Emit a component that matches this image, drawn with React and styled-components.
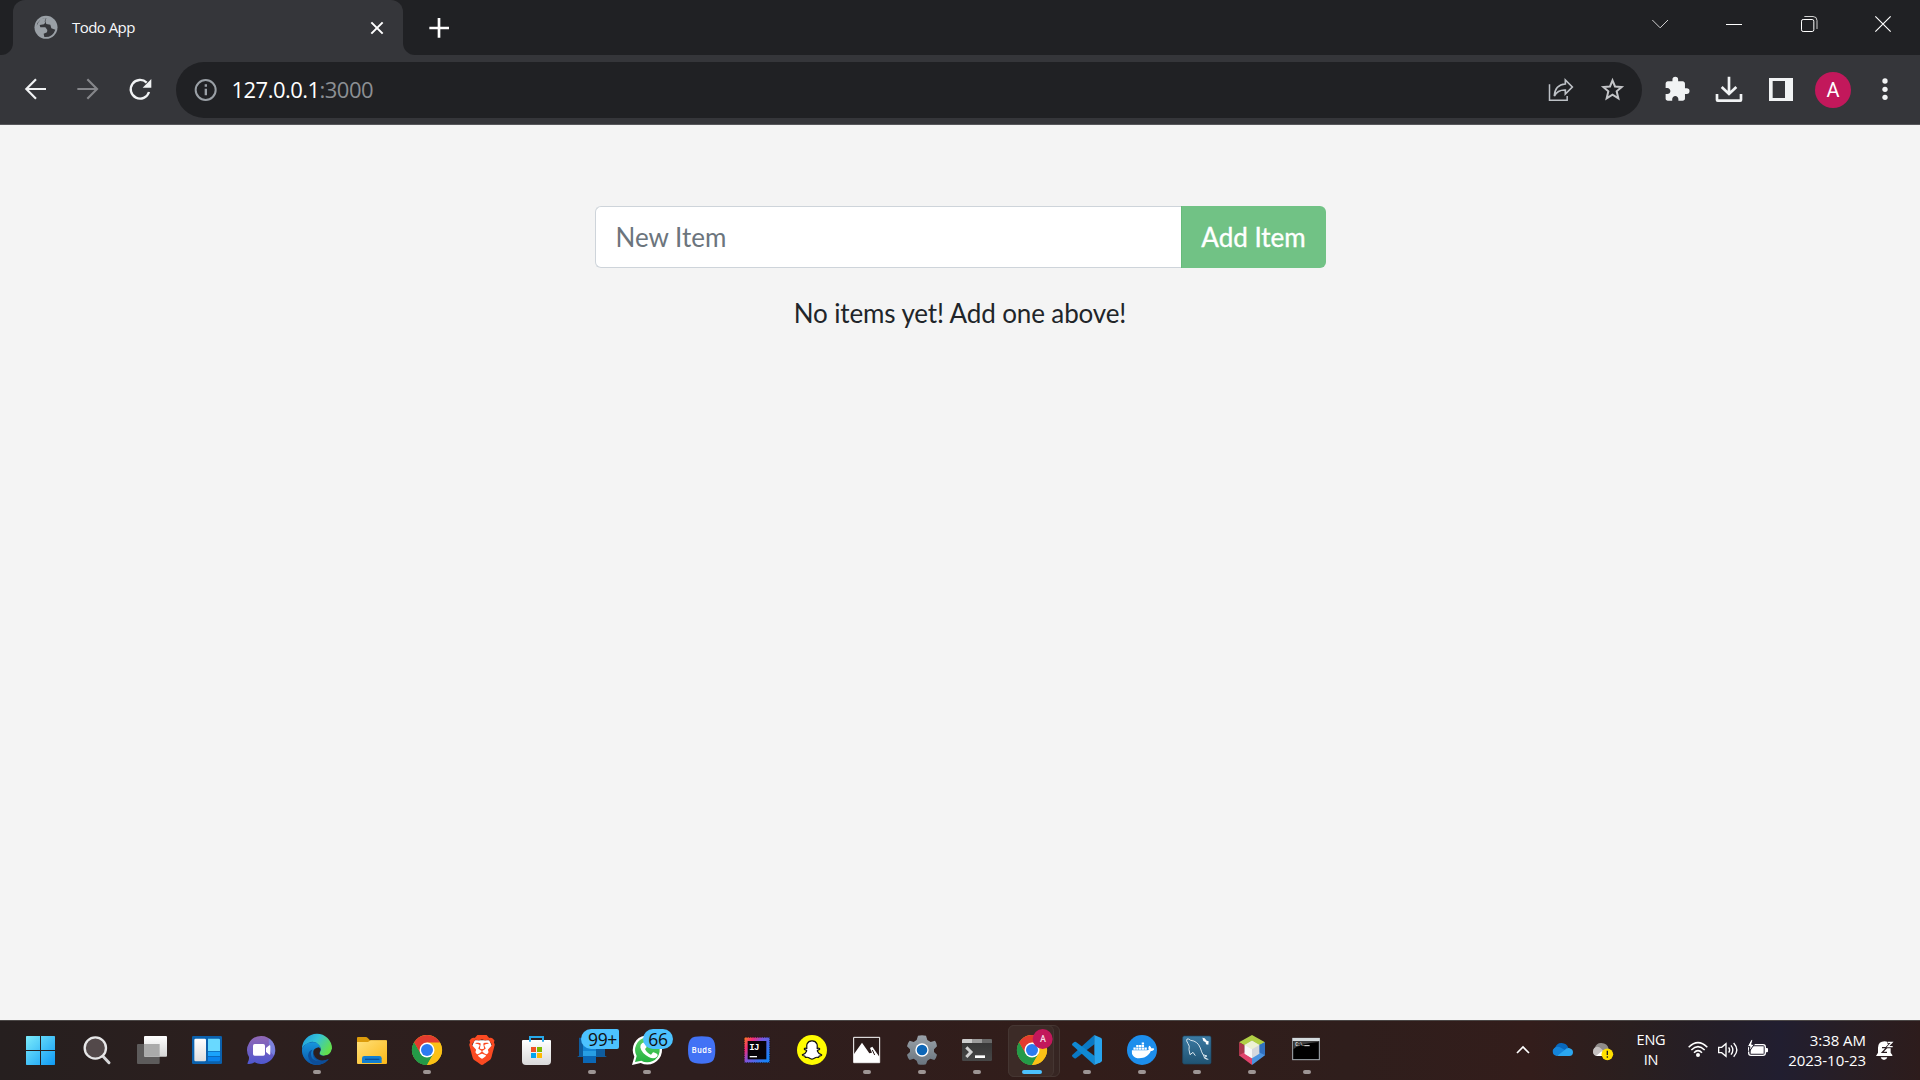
import React from "react";
import styled, { createGlobalStyle, css } from "styled-components";
import { FaDocker, FaSnapchatGhost } from "react-icons/fa";
import { SiBrave } from "react-icons/si";
import { MdExtension } from "react-icons/md";

const ui = `"Open Sans", "Noto Sans", sans-serif`;

const GlobalStyle = createGlobalStyle`
  * { box-sizing: border-box; }
  body { margin: 0; overflow: hidden; background: #f4f4f4; font-family: ${ui}; }
`;

const Screen = styled.div`
  display: flex;
  flex-direction: column;
  width: 1920px;
  height: 1080px;
`;

/* ---------- browser chrome ---------- */

const TabStrip = styled.header`
  display: flex;
  height: 55px;
  background: #35363a;
`;

const StripEdge = styled.div`
  width: 13px;
  background: #202124;
  border-bottom-right-radius: 12px;
`;

const TabSlot = styled.div`
  width: 390px;
  background: #202124;
`;

const Tab = styled.div`
  display: flex;
  align-items: center;
  height: 55px;
  padding: 0 17px 0 21px;
  border-radius: 12px 12px 0 0;
  background: #35363a;
`;

const TabTitle = styled.span`
  flex: 1;
  margin: 0 0 2px 14px;
  color: #f8f9fa;
  font-size: 15px;
  line-height: 20px;
  letter-spacing: -0.55px;
`;

const StripRest = styled.div`
  flex: 1;
  display: flex;
  justify-content: space-between;
  padding: 0 0 0 24px;
  background: #202124;
  border-bottom-left-radius: 12px;
`;

const NewTab = styled.div`
  display: flex;
  align-items: center;
  height: 55px;
`;

const WindowControls = styled.div`
  display: flex;
  height: 48px;
`;

const Control = styled.div`
  display: flex;
  align-items: center;
  justify-content: center;
  width: 74.33px;
`;

const Toolbar = styled.nav`
  display: flex;
  align-items: center;
  height: 70px;
  padding: 0 9px 1px 10px;
  background: #35363a;
  border-bottom: 1px solid #57575b;
`;

const ToolSlot = styled.div`
  display: flex;
  align-items: center;
  justify-content: center;
  width: 52px;
  height: 52px;
`;

const AddressBar = styled.div`
  flex: 1;
  display: flex;
  align-items: center;
  height: 56px;
  margin: 2px 9px 0 10px;
  padding: 0 3px 0 14px;
  border-radius: 28px;
  background: #202124;
`;

const Url = styled.span`
  flex: 1;
  margin: 0 0 2px 9.5px;
  color: #ffffff;
  font-size: 22px;
  line-height: 30px;
  letter-spacing: -0.53px;
`;

const Port = styled.span`
  color: #8c8f93;
`;

const Avatar = styled.div`
  display: flex;
  align-items: center;
  justify-content: center;
  width: 36px;
  height: 36px;
  margin-top: 1px;
  border-radius: 50%;
  background: #c2185b;
  color: #fff;
  font: 20px Roboto, sans-serif;
`;

/* ---------- page ---------- */

const Page = styled.main`
  flex: 1;
  display: flex;
  flex-direction: column;
  align-items: center;
  padding-top: 81px;
  background: #f4f4f4;
  color: #212529;
  font-family: Lato, sans-serif;
`;

const InputGroup = styled.form`
  display: flex;
  width: 731px;
  height: 62px;
`;

const ItemInput = styled.input`
  flex: 1;
  min-width: 0;
  padding: 0 20px;
  border: 1px solid #ced4da;
  border-right: 0;
  border-radius: 6px 0 0 6px;
  background: #fff;
  font: 26px Lato, sans-serif;
  &::placeholder { color: #6c757d; opacity: 1; }
`;

const AddButton = styled.button`
  width: 145px;
  padding: 0;
  border: 0;
  border-left: 1px solid #66ba7a;
  border-radius: 0 6px 6px 0;
  background: #71c285;
  color: #fff;
  font: 26px Lato, sans-serif;
  -webkit-text-stroke: 0.35px #fff;
`;

const Empty = styled.p`
  margin: 25px 0 0;
  font-size: 26px;
  line-height: 40px;
  letter-spacing: -0.12px;
`;

/* ---------- taskbar ---------- */

const Taskbar = styled.footer`
  display: flex;
  justify-content: space-between;
  height: 60px;
  padding-left: 14.5px;
  border-top: 1px solid #4b4746;
  background: linear-gradient(90deg, #261f1f 0, #2c1f1e 240px, #2e1e1e 700px, #321d1a 1080px, #2f1e1c 1350px, #331d1b 1530px, #2a1f1f 1630px, #241e28 1720px, #211e30 1780px, #281e24 1850px, #2d1c1c 1920px);
`;

const Apps = styled.div`
  display: flex;
`;

const AppSlot = styled.div`
  display: flex;
  flex-direction: column;
  align-items: center;
  gap: 5px;
  width: 55px;
  padding-top: 14px;
  position: relative;
  isolation: isolate;
  ${(p) =>
    p.$active &&
    css`
      &::before,
      &::after {
        content: "";
        position: absolute;
        z-index: -1;
        top: 4px;
        left: 3px;
        width: 44px;
        height: 50px;
        border: 1px solid #453632;
        border-radius: 6px;
        background: #3c2b27;
      }
      &::before {
        width: 50px;
        background: #362522;
      }
    `}
`;

const Running = styled.i`
  width: ${(p) => (p.$active ? 20 : 8)}px;
  height: 4px;
  border-radius: 2px;
  background: ${(p) => (p.$active ? "#4cc2ff" : "#9d9594")};
`;

const Badge = styled.span`
  position: absolute;
  top: 8px;
  left: ${(p) => p.$left}px;
  width: ${(p) => p.$width}px;
  height: 20px;
  padding-left: ${(p) => (p.$clipped ? 5 : 0)}px;
  border-radius: ${(p) => (p.$clipped ? "10px 2px 2px 10px" : "10px")};
  background: #4cc2ff;
  color: #101010;
  font-size: 17.5px;
  line-height: 21px;
  letter-spacing: -0.3px;
  text-align: center;
`;

const Tray = styled.div`
  display: flex;
  align-items: center;
  height: 58px;
  padding-right: 18px;
`;

const TrayItem = styled.div`
  display: flex;
  justify-content: center;
  width: ${(p) => p.$width}px;
`;

const TrayText = styled.div`
  width: ${(p) => p.$width}px;
  color: #fff;
  font-size: ${(p) => p.$size}px;
  line-height: 20px;
  text-align: ${(p) => p.$align};
  letter-spacing: ${(p) => p.$spacing || 0}px;
`;

/* Artwork is drawn on a grid of three units per pixel. */
const Glyph = ({ box, children }) => {
  const [, , w, h] = box.split(" ").map(Number);
  return (
    <svg width={w / 3} height={h / 3} viewBox={box} fill="none" display="block" overflow="visible">
      {children}
    </svg>
  );
};

const Grad = ({ id, from, to, diagonal }) => (
  <linearGradient id={id} x1="0" y1="0" x2={diagonal ? 1 : 0} y2="1">
    <stop stopColor={from} />
    <stop offset="1" stopColor={to} />
  </linearGradient>
);

const ChromeLogo = () => (
  <>
    <circle cx="45" cy="45" r="45" fill="#fbc116" />
    <path d="M6 22.5A45 45 0 0 0 45 90L64.5 56.2L45 45H19Z" fill="#249a48" />
    <path d="M84 22.5A45 45 0 0 1 45 90L64.5 56.2L45 22.5Z" fill="#fbc116" />
    <path d="M6 22.5A45 45 0 0 1 84 22.5H45L40 34L25.5 56Z" fill="#e33b2e" />
    <path d="M6 22.5L25.5 56L40 60V80L45 90A45 45 0 0 1 6 22.5Z" fill="#249a48" />
    <circle cx="45" cy="45" r="22.5" fill="#fff" />
    <circle cx="45" cy="45" r="18" fill="#2b7bf0" />
  </>
);

const apps = [
  {
    box: "81 60 90 90",
    art: (
      <>
        <Grad id="win" from="#7cecfb" to="#0f9af5" diagonal />
        <path d="M78 65q0-2 2-2h40v42H78zM123 63h40q2 0 2 2v40h-42zM78 108h42v42H80q-2 0-2-2zM123 108h42v40q0 2-2 2h-40z" fill="url(#win)" />
      </>
    ),
  },
  {
    box: "246 60 90 90",
    art: (
      <>
        <path d="M308 123l19 20" stroke="#d6d6d8" strokeWidth="9" strokeLinecap="round" />
        <circle cx="286" cy="99" r="32" fill="#53494a" stroke="#e7e7e8" strokeWidth="7" />
      </>
    ),
  },
  {
    box: "411 60 90 90",
    art: (
      <>
        <Grad id="tv" from="#ffffff" to="#d4d4d4" />
        <rect x="411" y="87" width="68" height="60" rx="3" fill="#5d5b5b" />
        <rect x="432" y="63" width="69" height="62" rx="3" fill="url(#tv)" />
        <path d="M432 87h47v37h-44q-3 0-3-3z" fill="#aaaaaa" />
      </>
    ),
  },
  {
    box: "576 60 90 90",
    art: (
      <>
        <Grad id="wd" from="#fff" to="#dedede" />
        <rect x="576" y="63" width="90" height="84" rx="4" fill="#0b61ad" />
        <rect x="583" y="71" width="35" height="68" rx="4" fill="url(#wd)" />
        <path d="M624 71h32q4 0 4 4v33h-36z" fill="#69d9ff" />
        <path d="M624 110h36v13h-36z" fill="#1aa3fc" />
        <path d="M624 125h36v10q0 4-4 4h-32z" fill="#0a83ec" />
      </>
    ),
  },
  {
    box: "741 60 90 90",
    art: (
      <>
        <Grad id="chat" from="#9268b5" to="#4e57cf" />
        <path d="M784 63a42 42 0 1 1-20 79q-8 6-20 5q-3-1-1-4q5-8 4-17A42 42 0 0 1 784 63z" fill="url(#chat)" />
        <path d="M806 70a42 42 0 0 1 16 52q-16-9-16-52z" fill="#7a8ee8" opacity=".7" />
        <rect x="759" y="87" width="36" height="35" rx="5" fill="#fff" />
        <path d="M798 99l10-8q3-1 3 2v24q0 3-3 2l-10-8z" fill="#fff" />
      </>
    ),
  },
  {
    box: "66 60 90 90",
    running: true,
    art: (
      <>
        <linearGradient id="edgeTop" x1="0" y1="0" x2="1" y2=".5">
          <stop stopColor="#1997df" />
          <stop offset=".5" stopColor="#35c3d7" />
          <stop offset="1" stopColor="#63df4d" />
        </linearGradient>
        <Grad id="edgeLow" from="#1796dd" to="#0a55a7" />
        <circle cx="111" cy="105" r="45" fill="#0f519c" />
        <path d="M108 150A45 45 0 0 1 66 103Q76 80 101 82Q121 85 121 99L112 103Q94 108 100 126Q109 143 136 137Q123 149 108 150Z" fill="url(#edgeLow)" />
        <path d="M66 102A45 45 0 0 1 156 101Q155 124 130 122Q115 120 121 109Q126 101 117 89Q104 76 86 83Q70 89 66 102Z" fill="url(#edgeTop)" />
        <path d="M100 108Q104 99 117 97Q125 104 119 111Q114 121 130 123Q146 124 158 114Q157 125 149 131Q120 144 105 126Q99 118 100 108Z" fill="#2d1f1f" />
        <path d="M130 122Q150 123 156 101L158 112Q150 127 130 123Z" fill="#2d1f1f" />
        <path d="M97 104Q88 118 98 132Q115 145 145 133Q130 150 111 150Q87 144 84 123Q85 107 97 104Z" fill="#0d4d98" />
      </>
    ),
  },
  {
    box: "231 60 90 90",
    art: (
      <>
        <Grad id="fold" from="#ffe07a" to="#fbb817" diagonal />
        <path d="M231 69q0-3 3-3h23q4 0 7 4l6 6h48q3 0 3 3v20h-90z" fill="#dc9b0b" />
        <path d="M231 81h33l8-5h46q3 0 3 3v65q0 3-3 3h-84q-3 0-3-3z" fill="url(#fold)" />
        <path d="M246 144v-14q0-7 7-7h45q7 0 7 7v14z" fill="#127fd1" />
        <path d="M255 133h43" stroke="#07509b" strokeWidth="4" />
      </>
    ),
  },
  { box: "0 0 90 90", running: true, art: <ChromeLogo /> },
  {
    box: "561 60 90 90",
    art: (
      <>
        <path d="M584 76h44l8 18-12 34-18 12-18-12-12-34z" fill="#fff" />
        <SiBrave x="561" y="60" size="90" color="#fb4a22" />
      </>
    ),
  },
  {
    box: "726 60 90 90",
    art: (
      <>
        <Grad id="store" from="#ffffff" to="#d9d9da" />
        <path d="M726 78q0-3 3-3h81q3 0 3 3v60q0 12-12 12h-63q-12 0-12-12z" fill="url(#store)" />
        <path d="M750 80V66h39v14" stroke="#26a9ea" strokeWidth="6" />
        <path d="M753 96h15v15h-15z" fill="#f05125" />
        <path d="M771 96h15v15h-15z" fill="#7fba00" />
        <path d="M753 114h15v15h-15z" fill="#03a4ef" />
        <path d="M771 114h15v15h-15z" fill="#ffb902" />
      </>
    ),
  },
  {
    box: "51 60 90 90",
    running: true,
    badge: { text: "99+", $left: 16.5, $width: 38, $clipped: true },
    art: (
      <>
        <path d="M57 68h27v58H51l6-4zM108 85h27v37l6 4h-33z" fill="#0e5c9e" />
        <path d="M69 70h39v60H69z" fill="#1384d3" />
        <path d="M69 123h39v21H69z" fill="#0b67b5" />
        <path d="M69 108h39v15H69z" fill="#279ee4" />
      </>
    ),
  },
  {
    box: "216 60 90 90",
    running: true,
    badge: { text: "66", $left: 23.5, $width: 30 },
    art: (
      <>
        <Grad id="wa" from="#5cd467" to="#25b03f" />
        <path d="M216 150l7-25A44 44 0 1 1 242 144z" fill="#fff" />
        <path d="M225 141l5-18A37 37 0 1 1 244 137z" fill="url(#wa)" />
        <path d="M247 84q4-3 8 0l5 11q0 3-5 7q6 13 18 17l6-7q3-1 13 5q3 4-2 9q-9 8-24 0q-22-12-25-29q-1-9 6-13z" fill="#fff" />
      </>
    ),
  },
  {
    box: "381 60 90 90",
    art: (
      <>
        <path d="M425 64q25 0 32 7q9 8 9 34t-9 34q-7 7-32 7t-32-7q-9-8-9-34t9-34q7-7 32-7z" fill="#4272f5" />
        <text x="425" y="113" fill="#fff" fontSize="22" fontWeight="600" fontFamily="Inter, sans-serif" textAnchor="middle" textLength="59">Buds</text>
      </>
    ),
  },
  {
    box: "546 60 90 90",
    art: (
      <>
        <linearGradient id="ij" x1="0" y1="0" x2="1" y2=".7">
          <stop stopColor="#fc801d" />
          <stop offset=".25" stopColor="#f52c76" />
          <stop offset=".5" stopColor="#7a56dd" />
          <stop offset="1" stopColor="#1782f8" />
        </linearGradient>
        <rect x="553" y="67" width="76" height="76" fill="url(#ij)" />
        <rect x="553" y="67" width="76" height="76" stroke="#080810" strokeWidth="2" strokeDasharray="3 4" />
        <rect x="563" y="78" width="56" height="55" fill="#08040a" />
        <text x="568" y="105" fill="#fff" fontSize="27" fontWeight="700" fontFamily="Liberation Mono, monospace" textLength="30">IJ</text>
        <path d="M569 125h22" stroke="#fff" strokeWidth="4" />
      </>
    ),
  },
  {
    box: "711 60 90 90",
    art: (
      <>
        <circle cx="756" cy="105" r="45" fill="#fffc00" />
        <FaSnapchatGhost x="727" y="76" size="58" color="#fff" style={{ stroke: "#111", strokeWidth: 32, overflow: "visible" }} />
      </>
    ),
  },
  {
    box: "36 60 90 90",
    running: true,
    art: (
      <>
        <path d="M41 67h78v76H41z" fill="#2b1c1b" stroke="#fff" strokeWidth="3" />
        <path d="M42 117L66 83L88 115L96 113L90 99L97 95L118 125V142H42Z" fill="#fff" />
        <path d="M97 105l7 15" stroke="#2b1c1b" strokeWidth="3" />
      </>
    ),
  },
  {
    box: "201 60 90 90",
    running: true,
    art: (
      <>
        <Grad id="gear" from="#9aa2a9" to="#69747e" />
        <path
          d="M234 62q12-3 24 0l4 13 10 6 13-4q5 6 6 17l-9 9v8l9 8q-2 10-8 16l-12-4-9 6-4 11q-12 3-24 0l-4-11-9-6-12 4q-6-6-8-16l9-8v-8l-9-9q2-11 8-17l12 4 9-6z"
          fill="url(#gear)"
        />
        <circle cx="246" cy="105" r="20" fill="#fff" />
        <circle cx="246" cy="105" r="16" fill="#0d66b7" />
      </>
    ),
  },
  {
    box: "366 60 90 90",
    running: true,
    art: (
      <>
        <Grad id="term" from="#343434" to="#474747" />
        <rect x="366" y="72" width="90" height="66" rx="4" fill="url(#term)" />
        <path d="M366 84v-8q0-4 4-4h28v12z" fill="#cdcdcd" />
        <path d="M398 72h28v12h-28z" fill="#9c9c9c" />
        <path d="M426 72h26q4 0 4 4v8h-30z" fill="#696969" />
        <path d="M379 97l14 14-14 15" stroke="#d2d2d2" strokeWidth="9" />
        <path d="M405 121h30v8h-30z" fill="#fff" />
      </>
    ),
  },
  {
    box: "0 0 90 90",
    running: true,
    active: true,
    art: (
      <>
        <ChromeLogo />
        <circle cx="77" cy="12" r="30" fill="#c2185b" />
        <text x="78" y="22" fill="#f3dce5" fontSize="27" fontWeight="500" fontFamily="Roboto, sans-serif" textAnchor="middle">A</text>
      </>
    ),
  },
  {
    box: "696 60 90 90",
    running: true,
    art: (
      <>
        <path d="M763 60L696 121q0 3 2 5l5 4q3 1 5 0L764 87z" fill="#0a79c4" />
        <path d="M763 150L696 90q0-3 2-5l5-4q3-1 5 0L764 123z" fill="#1089d3" />
        <path d="M763 60l19 8q4 2 4 6v62q0 4-4 6l-19 8z" fill="#27a4ee" />
      </>
    ),
  },
  {
    box: "81 60 90 90",
    running: true,
    art: (
      <>
        <circle cx="126" cy="105" r="45" fill="#1d8eec" />
        <FaDocker x="95" y="72" size="68" color="#fff" />
      </>
    ),
  },
  {
    box: "246 60 90 90",
    running: true,
    art: (
      <>
        <Grad id="sql" from="#3c7ba4" to="#205372" />
        <rect x="248" y="63" width="85" height="84" rx="5" fill="url(#sql)" stroke="#1c4a66" strokeWidth="2" />
        <path d="M267 104Q270 92 264 86Q257 76 261 72Q266 70 272 76Q293 78 301 99Q305 112 309 119L321 123L314 126Q315 130 322 133M267 104L270 119L279 112L286 122M310 119L314 130L325 133" stroke="#d7e5ed" strokeWidth="3" />
        <path d="M307 68l7 2 6 7 6 2-1 10-7-1-1-6-7-4z" fill="#fff" />
      </>
    ),
  },
  {
    box: "411 60 90 90",
    running: true,
    art: (
      <>
        <path d="M456 60l39 22-39 22-39-22z" fill="#b0cf45" />
        <path d="M417 82l17 9v38l-17-8z" fill="#a9364b" />
        <path d="M417 121l17-9 22 13v25z" fill="#e0446c" />
        <path d="M495 82v39l-39 29v-25l20-34z" fill="#4c94e0" />
        <path d="M495 82l-18 9v21l18 9z" fill="#3171c0" />
        <path d="M456 77l22 13v26l-22 14-22-14V90z" fill="#d6d8de" />
        <path d="M456 77l22 13-22 13-22-13z" fill="#edf1d5" />
        <path d="M434 90l22 13v27l-22-14z" fill="#f8f8f8" />
      </>
    ),
  },
  {
    box: "576 60 90 90",
    running: true,
    art: (
      <>
        <rect x="578" y="70" width="80" height="64" fill="#000" stroke="#a7b0b6" strokeWidth="3" />
        <path d="M580 78h76v3Q600 85 580 103z" fill="#404040" />
        <path d="M578 69h81v9h-81z" fill="#d4dadd" />
        <text x="586" y="94" fill="#ddd" fontSize="14" fontWeight="700" fontFamily="Liberation Mono, monospace" textLength="29">C:\.</text>
        <path d="M613 92h16" stroke="#eee" strokeWidth="3" />
      </>
    ),
  },
];

const AppIcon = ({ box, art, running, active, badge }) => (
  <AppSlot $active={active}>
    <Glyph box={box}>{art}</Glyph>
    {running && <Running $active={active} />}
    {badge && <Badge {...badge}>{badge.text}</Badge>}
  </AppSlot>
);

export default function App() {
  return (
    <Screen>
      <GlobalStyle />
      <TabStrip>
        <StripEdge />
        <TabSlot>
          <Tab>
            <Glyph box="102 50 72 72">
              <circle cx="138" cy="84" r="34.5" fill="#9aa0a6" />
              <path d="M110 79Q114 59 138 56L134 66Q138 70 132 75L119 77L121 84L136 84L142 92L141 99L131 103L133 113Q158 115 166 91L154 87L151 76L139 74L136 66L139 56Q119 55 110 79Z" fill="#35363a" />
            </Glyph>
            <TabTitle>Todo App</TabTitle>
            <Glyph box="1104 57 54 54">
              <path d="M1114 67l34 34M1148 67l-34 34" stroke="#fff" strokeWidth="6" />
            </Glyph>
          </Tab>
        </TabSlot>
        <StripRest>
          <NewTab>
            <Glyph box="1280 48 72 72">
              <path d="M1287 84h59M1316 54v59" stroke="#fff" strokeWidth="8" />
            </Glyph>
          </NewTab>
          <WindowControls>
            <Control>
              <Glyph box="450 42 60 60">
                <path d="M457 60l23.5 23.5L504 60" stroke="#d0d0d1" strokeWidth="3" />
              </Glyph>
            </Control>
            <Control>
              <Glyph box="672 42 60 60">
                <path d="M678 73.5h48" stroke="#fff" strokeWidth="3" />
              </Glyph>
            </Control>
            <Control>
              <Glyph box="894 42 60 60">
                <rect x="901.5" y="58.5" width="37" height="36" rx="5" stroke="#fff" strokeWidth="3" />
                <path d="M910 49.5h26q12 0 12 12V87" stroke="#d0d0d0" strokeWidth="3" />
              </Glyph>
            </Control>
            <Control>
              <Glyph box="1119 42 60 60">
                <path d="M1126 49l46 46M1172 49l-46 46" stroke="#fff" strokeWidth="3.5" />
              </Glyph>
            </Control>
          </WindowControls>
        </StripRest>
      </TabStrip>

      <Toolbar>
        <ToolSlot>
          <Glyph box="63 222 90 90">
            <path d="M138 267H80M108 238l-29 29 29 29" stroke="#f1f3f4" strokeWidth="6.5" />
          </Glyph>
        </ToolSlot>
        <ToolSlot>
          <Glyph box="219 222 90 90">
            <path d="M232 267h58M262 238l29 29-29 29" stroke="#85868a" strokeWidth="6.5" />
          </Glyph>
        </ToolSlot>
        <ToolSlot>
          <Glyph box="375 222 90 90">
            <path d="M440 248A28 28 0 1 0 447 276" stroke="#f1f3f4" strokeWidth="7" />
            <path d="M454 237v26h-26z" fill="#f1f3f4" />
          </Glyph>
        </ToolSlot>
        <AddressBar>
          <Glyph box="570 222 96 96">
            <circle cx="617" cy="270" r="30" stroke="#9aa0a6" strokeWidth="6" />
            <path d="M614 253h7v7h-7zM614 266h7v20h-7z" fill="#9aa0a6" />
          </Glyph>
          <Url>
            127.0.0.1<Port>:3000</Port>
          </Url>
          <ToolSlot>
            <Glyph box="138 225 90 90">
              <path d="M148.5 253v48h53v-13" stroke="#bdc1c6" strokeWidth="4.5" />
              <path d="M163 288Q165 254 196 252V240L217 261L196 282V270Q173 269 163 288Z" stroke="#bdc1c6" strokeWidth="5" />
            </Glyph>
          </ToolSlot>
          <ToolSlot>
            <Glyph box="294 225 90 90">
              <path d="M337.5 241L345 259.5L365 261L350 274L355 295L337.5 284L320 295L325 274L310 261L330 259.5Z" stroke="#c4c5c8" strokeWidth="6" />
            </Glyph>
          </ToolSlot>
        </AddressBar>
        <ToolSlot>
          <Glyph box="486 222 90 90">
            <MdExtension x="490" y="227" size="82" color="#f1f3f4" />
          </Glyph>
        </ToolSlot>
        <ToolSlot>
          <Glyph box="642 222 90 90">
            <path d="M687 230v49M665 261l22 21 22-21M651 282v18q0 2 2 2h68q2 0 2-2v-18" stroke="#f1f3f4" strokeWidth="8" />
          </Glyph>
        </ToolSlot>
        <ToolSlot>
          <Glyph box="798 222 90 90">
            <path fillRule="evenodd" d="M807 234h72v69h-72zM818 243v51h37v-51z" fill="#f1f3f4" />
          </Glyph>
        </ToolSlot>
        <ToolSlot>
          <Avatar>A</Avatar>
        </ToolSlot>
        <ToolSlot>
          <Glyph box="1110 222 90 90">
            <g fill="#f1f3f4">
              <circle cx="1155" cy="243" r="8" />
              <circle cx="1155" cy="268" r="8" />
              <circle cx="1155" cy="292" r="8" />
            </g>
          </Glyph>
        </ToolSlot>
      </Toolbar>

      <Page>
        <InputGroup>
          <ItemInput placeholder="New Item" />
          <AddButton type="button">Add Item</AddButton>
        </InputGroup>
        <Empty>No items yet! Add one above!</Empty>
      </Page>

      <Taskbar>
        <Apps>
          {apps.map((app, i) => (
            <AppIcon key={i} {...app} />
          ))}
        </Apps>
        <Tray>
          <TrayItem $width={40}>
            <Glyph box="39 75 60 60">
              <path d="M51 114l18-18 18 18" stroke="#fff" strokeWidth="5" />
            </Glyph>
          </TrayItem>
          <TrayItem $width={40}>
            <Glyph box="159 75 60 60">
              <path d="M165 99Q171 83 185 84Q200 85 205 98L190 112L161 118Q153 105 165 99Z" fill="#0868bd" />
              <path d="M163 99Q173 92 184 99L207 112L170 123Q157 120 159 108Q159 102 163 99Z" fill="#1484da" />
              <path d="M171 123L195 104Q199 98 207 99Q219 102 219 112Q219 123 208 123Z" fill="#2ba6ef" />
            </Glyph>
          </TrayItem>
          <TrayItem $width={40}>
            <Glyph box="279 75 60 60">
              <path d="M284 99Q290 83 304 84Q322 85 326 101L310 123H290Q278 120 279 109Q280 102 284 99Z" fill="#8f8b89" />
              <path d="M283 99Q294 91 304 101L313 110L289 123Q278 119 279 109Q280 102 283 99Z" fill="#c5c1c0" />
              <path d="M288 123l17-14 5 14z" fill="#fff" />
              <circle cx="322" cy="118" r="17.5" fill="#ffe000" />
              <path d="M322 107v13M322 124v4" stroke="#222" strokeWidth="4" />
            </Glyph>
          </TrayItem>
          <TrayText $width={56} $size={14.5} $align="center" $spacing={-0.2}>
            ENG
            <br />
            IN
          </TrayText>
          <TrayItem $width={38}>
            <Glyph box="24 75 60 60">
              <g stroke="#fff" strokeWidth="4.5">
                <path d="M26 97Q54 69 82 97" />
                <path d="M34 105Q54 85 74 105" />
                <path d="M42 113Q54 101 66 113" />
              </g>
              <circle cx="54" cy="120" r="6" fill="#fff" />
            </Glyph>
          </TrayItem>
          <TrayItem $width={22}>
            <Glyph box="114 75 60 60">
              <g stroke="#fff" strokeWidth="4">
                <path d="M116 97h9l13-11v38l-13-11h-9z" />
                <path d="M146 97q6 8 0 16M153 91q11 14 0 28M161 84q19 21 0 41" />
              </g>
            </Glyph>
          </TrayItem>
          <TrayItem $width={38}>
            <Glyph box="204 75 60 60">
              <rect x="206" y="89" width="50" height="32" rx="7" stroke="#fff" strokeWidth="4" />
              <path d="M217 94h34v22h-39v-9z" fill="#fff" />
              <path d="M257 99h4q3 0 3 3v7q0 3-3 3h-4z" fill="#fff" />
              <path d="M213 74l-11 21h8l-3 15 16-22h-8l4-14z" fill="#fff" stroke="#211e2c" strokeWidth="3" />
            </Glyph>
          </TrayItem>
          <TrayText $width={89} $size={15} $align="right" $spacing={-0.05}>
            3:38 AM
            <br />
            2023-10-23
          </TrayText>
          <TrayItem $width={36}>
            <Glyph box="585 75 60 60">
              <path d="M591 123l6-10V98Q598 79 617 79Q634 80 635 98V113L640 120V123Z" fill="#fff" />
              <path d="M605 127h20q-2 8-10 8t-10-8z" fill="#fff" />
              <path d="M609 98h14l-13 14h14" stroke="#2a1e22" strokeWidth="4" />
              <path d="M625 82h14l-12 13h14" stroke="#2a1e22" strokeWidth="9" />
              <path d="M626 82h13l-12 13h14" stroke="#fff" strokeWidth="4" />
            </Glyph>
          </TrayItem>
        </Tray>
      </Taskbar>
    </Screen>
  );
}
